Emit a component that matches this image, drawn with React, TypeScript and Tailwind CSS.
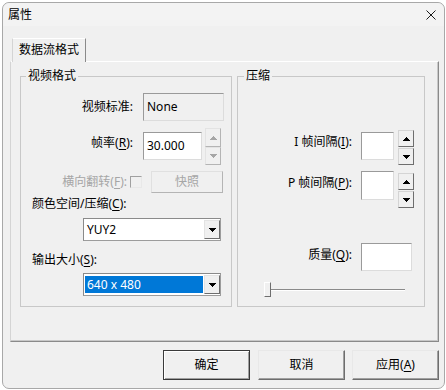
import React from 'react';

function U({ c }: { c: string }) {
  return <span className="underline underline-offset-[2px] decoration-[1px]">{c}</span>;
}

function Tri({ up, color }: { up?: boolean; color: string }) {
  return (
    <svg width="7" height="4" viewBox="0 0 7 4" shapeRendering="crispEdges">
      {up ? (
        <path d="M3 0h1v1h1v1h1v1h1v1h-7v-1h1v-1h1v-1h1z" fill={color} />
      ) : (
        <path d="M0 0h7v1h-1v1h-1v1h-1v1h-1v-1h-1v-1h-1v-1h-1z" fill={color} />
      )}
    </svg>
  );
}

function SpinBtn({ up, h, disabled }: { up?: boolean; h: string; disabled?: boolean }) {
  return (
    <div
      className={
        'w-[16px] flex items-center justify-center bg-[#f0f0f0] border ' +
        h +
        (disabled
          ? ' border-t-[#e3e3e3] border-l-[#e3e3e3] border-r-[#b4b4b4] border-b-[#b4b4b4]'
          : ' border-t-[#d4d4d4] border-l-[#d4d4d4] border-r-[#6e6e6e] border-b-[#6e6e6e]')
      }
    >
      <Tri up={up} color={disabled ? '#a6a6a6' : '#000000'} />
    </div>
  );
}

function Combo({ text, selected }: { text: string; selected?: boolean }) {
  return (
    <div className="ml-[62px] w-[138px] h-[23px] flex bg-white border border-[#8a8a8a] border-b-[#9c9c9c] border-r-[#9c9c9c]">
      <div className="flex-1 flex py-[2px] pl-[1px] pr-[1px]">
        <div
          className={
            'flex-1 flex items-center pl-[2px] leading-[16px] ' +
            (selected ? 'bg-[#0078d7] text-white' : 'text-black')
          }
        >
          {text}
        </div>
      </div>
      <div className="w-[16px] my-[1px] flex items-center justify-center bg-[#f0f0f0] border border-t-[#e3e3e3] border-l-[#e3e3e3] border-r-[#6e6e6e] border-b-[#6e6e6e]">
        <Tri color="#000000" />
      </div>
    </div>
  );
}

function Btn({ children, def, cls }: { children: React.ReactNode; def?: boolean; cls?: string }) {
  return (
    <div
      className={
        'w-[87px] h-[30px] flex items-center justify-center bg-[#f0f0f0] border ' +
        (def
          ? 'border-[#3a3a3a] shadow-[inset_1px_1px_0_#ffffff,inset_-1px_-1px_0_#a0a0a0] '
          : 'border-t-[#e8e8e8] border-l-[#e8e8e8] border-r-[#6e6e6e] border-b-[#6e6e6e] shadow-[inset_-1px_-1px_0_#a0a0a0] ') +
        (cls || '')
      }
    >
      {children}
    </div>
  );
}

const sunken = 'border border-t-[#9a9a9a] border-l-[#9a9a9a] border-r-[#dcdcdc] border-b-[#dcdcdc]';

export default function App() {
  return (
    <div className="w-[446px] h-[390px] bg-white overflow-hidden text-[12px] text-black font-['Noto_Sans','Noto_Sans_CJK_SC',sans-serif]">
      <div className="ml-[2px] mt-[2px] w-[443px] h-[387px] bg-[#f0f0f0] border border-[#a8a8a8] rounded-[7px] flex flex-col">
        {/* title bar */}
        <div className="h-[23px] flex items-center justify-between pl-[5px] pr-[8px] rounded-t-[7px] bg-[#f3f3f3]">
          <span className="text-[12px] leading-[16px]">属性</span>
          <svg width="10" height="10" viewBox="0 0 10 10">
            <path d="M0.5 0.5L9.5 9.5M9.5 0.5L0.5 9.5" stroke="#1a1a1a" strokeWidth="1" />
          </svg>
        </div>

        {/* tab header */}
        <div className="mt-[12px] ml-[9px] w-[74px] h-[24px] -mb-[1px] relative z-10 bg-[#f0f0f0] border border-b-0 border-t-[#ffffff] border-l-[#d4d4d4] border-r-[#8a8a8a] flex items-center justify-center leading-[16px] pb-[1px]">
          数据流格式
        </div>

        {/* tab panel */}
        <div className="ml-[7px] w-[429px] h-[281px] border border-t-[#ffffff] border-l-[#d4d4d4] border-r-[#8a8a8a] border-b-[#8a8a8a] shadow-[inset_-1px_-1px_0_#c8c8c8] flex items-start pt-[14px] pl-[9px] gap-[5px]">
          {/* left group */}
          <div className="w-[212px] h-[231px] border border-[#c8c8c8] flex flex-col">
            <div className="-mt-[9px] ml-[5px] px-[2px] w-fit bg-[#f0f0f0] leading-[16px]">视频格式</div>

            <div className="mt-[9px] h-[28px] flex items-center">
              <div className="w-[112px] text-right leading-[16px]">视频标准:</div>
              <div className={'ml-[10px] w-[81px] h-[28px] bg-[#f0f0f0] flex items-center pl-[3px] leading-[16px] ' + sunken}>
                None
              </div>
            </div>

            <div className="mt-[7px] h-[37px] flex items-start">
              <div className="w-[112px] mt-[7px] text-right leading-[16px]">
                帧率(<U c="R" />):
              </div>
              <div className={'ml-[10px] mt-[4px] w-[59px] h-[28px] bg-white flex items-center pl-[3px] leading-[16px] ' + sunken}>
                30.000
              </div>
              <div className="ml-[3px] flex flex-col">
                <SpinBtn up h="h-[19px]" disabled />
                <SpinBtn h="h-[18px]" disabled />
              </div>
            </div>

            <div className="mt-[6px] h-[22px] flex items-center">
              <div className="w-[106px] shrink-0 text-right leading-[16px] text-[#a6a6a6]">
                横向翻转(<U c="F" />):
              </div>
              <div className="ml-[3px] shrink-0 w-[12px] h-[12px] bg-[#f0f0f0] border border-t-[#a0a0a0] border-l-[#a0a0a0] border-r-[#e8e8e8] border-b-[#e8e8e8]" />
              <div className="ml-[9px] shrink-0 w-[72px] h-[22px] flex items-center justify-center text-[#a6a6a6] leading-[16px] border border-t-[#e0e0e0] border-l-[#e0e0e0] border-r-[#b4b4b4] border-b-[#b4b4b4]">
                快照
              </div>
            </div>

            <div className="mt-[3px] pl-[11px] leading-[16px]">
              颜色空间/压缩(<U c="C" />):
            </div>
            <div className="mt-[6px]">
              <Combo text="YUY2" />
            </div>
            <div className="mt-[11px] pl-[11px] leading-[16px]">
              输出大小(<U c="S" />):
            </div>
            <div className="mt-[5px]">
              <Combo text="640 x 480" selected />
            </div>
          </div>

          {/* right group */}
          <div className="w-[188px] h-[231px] border border-[#c8c8c8] flex flex-col">
            <div className="-mt-[9px] ml-[6px] px-[2px] w-fit bg-[#f0f0f0] leading-[16px]">压缩</div>

            <div className="mt-[46px] flex items-start">
              <div className="w-[114px] mt-[4px] text-right leading-[16px]">
                I 帧间隔(<U c="I" />):
              </div>
              <div className={'ml-[9px] mt-[2px] w-[33px] h-[28px] bg-white ' + sunken} />
              <div className="ml-[4px] flex flex-col gap-[1px]">
                <SpinBtn up h="h-[17px]" />
                <SpinBtn h="h-[17px]" />
              </div>
            </div>

            <div className="mt-[6px] flex items-start">
              <div className="w-[114px] mt-[4px] text-right leading-[16px]">
                P 帧间隔(<U c="P" />):
              </div>
              <div className={'ml-[9px] w-[33px] h-[29px] bg-white ' + sunken} />
              <div className="ml-[4px] mt-[2px] flex flex-col gap-[1px]">
                <SpinBtn up h="h-[17px]" />
                <SpinBtn h="h-[17px]" />
              </div>
            </div>

            <div className="mt-[35px] flex items-start">
              <div className="w-[114px] mt-[4px] text-right leading-[16px]">
                质量(<U c="Q" />):
              </div>
              <div className={'ml-[9px] w-[51px] h-[28px] bg-white ' + sunken} />
            </div>

            <div className="mt-[11px] ml-[26px] flex items-center">
              <div className="w-[7px] h-[15px] bg-[#f0f0f0] border border-t-[#ffffff] border-l-[#ffffff] border-r-[#6e6e6e] border-b-[#6e6e6e]" />
              <div className="w-[134px] h-[2px] border-t border-t-[#8a8a8a] border-b border-b-[#ffffff]" />
            </div>
          </div>
        </div>

        {/* buttons */}
        <div className="mt-[8px] flex justify-end pr-[5px]">
          <Btn def>确定</Btn>
          <Btn cls="ml-[8px]">取消</Btn>
          <Btn cls="ml-[7px]">
            应用(<U c="A" />)
          </Btn>
        </div>
      </div>
    </div>
  );
}
